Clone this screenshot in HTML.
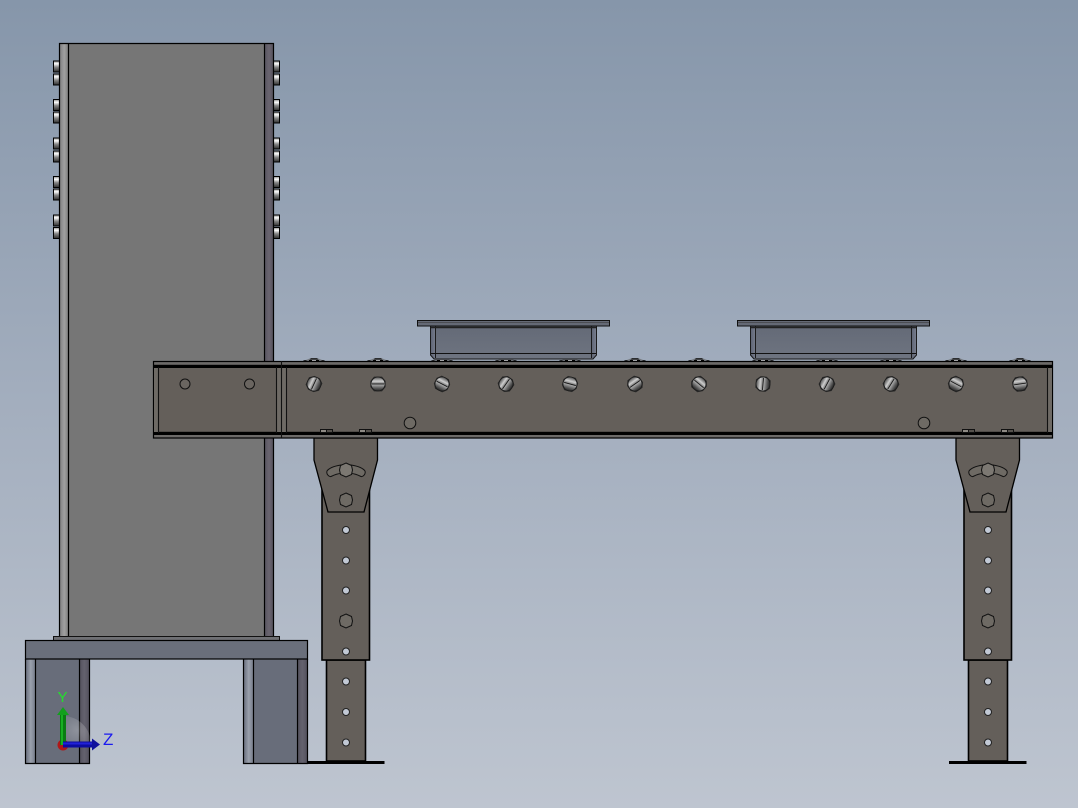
<!DOCTYPE html>
<html>
<head>
<meta charset="utf-8">
<style>
html,body{margin:0;padding:0;width:1078px;height:808px;overflow:hidden;background:#a3aebd}
svg{display:block}
</style>
</head>
<body>
<svg width="1078" height="808" viewBox="0 0 1078 808" xmlns="http://www.w3.org/2000/svg">
<defs>
<linearGradient id="bg" x1="0" y1="0" x2="0" y2="1"><stop offset="0" stop-color="#8696aa"/><stop offset=".5" stop-color="#a3aebe"/><stop offset="1" stop-color="#bec5d0"/></linearGradient>
<linearGradient id="gStud" x1="0" y1="0" x2="0" y2="1"><stop offset="0" stop-color="#888"/><stop offset=".25" stop-color="#fff"/><stop offset=".55" stop-color="#888"/><stop offset="1" stop-color="#2c2c2c"/></linearGradient>
<linearGradient id="lf" x1="0" y1="0" x2="1" y2="0"><stop offset="0" stop-color="#808082"/><stop offset=".5" stop-color="#a0a0a0"/><stop offset="1" stop-color="#7c7c7c"/></linearGradient>
<linearGradient id="rf" x1="0" y1="0" x2="1" y2="0"><stop offset="0" stop-color="#585560"/><stop offset=".5" stop-color="#6a6570"/><stop offset="1" stop-color="#55525c"/></linearGradient>
<linearGradient id="ll" x1="0" y1="0" x2="1" y2="0"><stop offset="0" stop-color="#6c7280"/><stop offset=".5" stop-color="#9aa0ac"/><stop offset="1" stop-color="#747a88"/></linearGradient>
<linearGradient id="lr" x1="0" y1="0" x2="1" y2="0"><stop offset="0" stop-color="#54525e"/><stop offset=".5" stop-color="#64626e"/><stop offset="1" stop-color="#52505c"/></linearGradient>
<linearGradient id="gBall" x1="0" y1="0" x2="0" y2="1"><stop offset="0" stop-color="#4c4c4c"/><stop offset=".3" stop-color="#cfcfcf"/><stop offset=".48" stop-color="#7a7a7a"/><stop offset=".55" stop-color="#a8a8a8"/><stop offset=".78" stop-color="#5e5e5e"/><stop offset="1" stop-color="#222"/></linearGradient>
<linearGradient id="gTray" x1="0" y1="0" x2="0" y2="1"><stop offset="0" stop-color="#646a77"/><stop offset="1" stop-color="#6e7480"/></linearGradient>
<linearGradient id="gTs" x1="0" y1="0" x2="1" y2="0"><stop offset="0" stop-color="#5f6575"/><stop offset="1" stop-color="#767c8c"/></linearGradient>
<radialGradient id="sphere" cx=".5" cy=".5" r=".5"><stop offset="0" stop-color="#fff" stop-opacity=".26"/><stop offset="1" stop-color="#fff" stop-opacity=".12"/></radialGradient>

<g id="stud"><rect x="0" y="0" width="6" height="11" fill="url(#gStud)" stroke="#000" stroke-width="1"/></g>

<g id="bolt">
<path d="M-4 -7.400L-7.600 -3L-7.600 3L-4 7.400L4 7.400L7.600 3L7.600 -3L4 -7.400Z" fill="#2a2a2a"/>
<circle r="7" fill="url(#gBall)" stroke="#1c1c1c" stroke-width=".8"/>
<path d="M-6 0H6" stroke="#111" stroke-width=".8" fill="none"/>
</g>

<g id="dome">
<path d="M-11 3C-7 1.500 -4.500 .5 -3.500 .2L3.500 .2C4.500 .5 7 1.500 11 3Z" fill="#777b82"/>
<path d="M-10.500 2.800H-7.500M-5 2.500H-2M2 2.500H5M7.500 2.800H10.500" stroke="#000" stroke-width="1"/>
<path d="M-4.500 1.500L-3 .3H3L4.500 1.500Z" fill="#0c0c0c"/>
<path d="M-2 2.800H2" stroke="#e6e6e6" stroke-width=".8"/>
</g>

<g id="tray">
<path d="M430.500 326V355L434 359H593L596.500 355V326Z" fill="url(#gTray)"/>
<path d="M431 326H435.500V358H434L431 355Z" fill="url(#gTs)"/>
<path d="M591.500 326H596V355L593 358H591.500Z" fill="url(#gTs)"/>
<path d="M430.500 326V355L434 359H593L596.500 355V326M435.500 326V358M591.500 326V358" stroke="#1a1a1a" stroke-width="1" fill="none"/>
<path d="M431 353.500H596" stroke="#111" stroke-width="1"/>
<path d="M431 327.500H596" stroke="#222" stroke-width="1.500"/>
<rect x="417.500" y="320.500" width="192" height="5.500" fill="#646975" stroke="#111" stroke-width="1"/>
<path d="M418 322.500H609" stroke="#333" stroke-width=".6"/>
</g>

<g id="leg">
<rect x="326.500" y="660" width="39" height="101" fill="#645f5a" stroke="#000" stroke-width="1.600"/>
<path d="M307 762.500H384.500" stroke="#000" stroke-width="3"/>
<rect x="322" y="470" width="47.500" height="190" fill="#645f5a" stroke="#000" stroke-width="1.600"/>
<path d="M314 438V460L328 512H364L377.500 460V438Z" fill="#645f5a" stroke="#000" stroke-width="1.300"/>
<g fill="#c2c9d5" stroke="#222" stroke-width="1">
<circle cx="346" cy="530" r="3.500"/><circle cx="346" cy="560.500" r="3.500"/><circle cx="346" cy="590.500" r="3.500"/><circle cx="346" cy="651.500" r="3.500"/><circle cx="346" cy="681.500" r="3.500"/><circle cx="346" cy="712" r="3.500"/><circle cx="346" cy="742.500" r="3.500"/>
</g>
<g fill="#6e6a64" stroke="#111" stroke-width="1">
<path d="M346 493L351.500 495.500L352.500 500L351.500 504.500L346 507L340.500 504.500L339.500 500L340.500 495.500Z"/>
<path d="M346 614L351.500 616.500L352.500 621L351.500 625.500L346 628L340.500 625.500L339.500 621L340.500 616.500Z"/>
<path d="M341 465C335 466 329 468 327 471C326 474 329 477 331 476.500C335 474.500 338 473.500 341 473.500Z"/>
<path d="M351 465C357 466 363 468 365 471C366 474 363 477 361 476.500C357 474.500 354 473.500 351 473.500Z"/>
<path d="M346 463L351.500 465.500L352.500 470L351.500 474.500L346 477L340.500 474.500L339.500 470L340.500 465.500Z" fill="#7c7872"/>
</g>
</g>
</defs>

<rect width="1078" height="808" fill="url(#bg)"/>

<!-- studs left -->
<use href="#stud" x="53.500" y="61"/><use href="#stud" x="53.500" y="74"/>
<use href="#stud" x="53.500" y="99.500"/><use href="#stud" x="53.500" y="112"/>
<use href="#stud" x="53.500" y="138"/><use href="#stud" x="53.500" y="151"/>
<use href="#stud" x="53.500" y="176.500"/><use href="#stud" x="53.500" y="189"/>
<use href="#stud" x="53.500" y="215"/><use href="#stud" x="53.500" y="227.500"/>
<!-- studs right -->
<use href="#stud" x="273.500" y="61"/><use href="#stud" x="273.500" y="74"/>
<use href="#stud" x="273.500" y="99.500"/><use href="#stud" x="273.500" y="112"/>
<use href="#stud" x="273.500" y="138"/><use href="#stud" x="273.500" y="151"/>
<use href="#stud" x="273.500" y="176.500"/><use href="#stud" x="273.500" y="189"/>
<use href="#stud" x="273.500" y="215"/><use href="#stud" x="273.500" y="227.500"/>

<!-- tower -->
<rect x="59.500" y="43.500" width="214" height="597" fill="#767676"/>
<rect x="60" y="44" width="8.500" height="596" fill="url(#lf)"/>
<rect x="264.500" y="44" width="9" height="596" fill="url(#rf)"/>
<path d="M59.500 640V43.500H273.500V640M68.500 44V640M264.500 44V640" fill="none" stroke="#000" stroke-width="1.200"/>

<!-- base -->
<rect x="25.500" y="659" width="64" height="104.500" fill="#686d7a"/>
<rect x="26" y="659" width="9.500" height="104" fill="url(#ll)"/>
<rect x="79.500" y="659" width="10" height="104" fill="url(#lr)"/>
<path d="M25.500 659V763.500H89.500V659M35.500 659V763M79.500 659V763" fill="none" stroke="#000" stroke-width="1.200"/>
<rect x="243.500" y="659" width="64" height="104.500" fill="#686d7a"/>
<rect x="244" y="659" width="9.500" height="104" fill="url(#ll)"/>
<rect x="297.500" y="659" width="10" height="104" fill="url(#lr)"/>
<path d="M243.500 659V763.500H307.500V659M253.500 659V763M297.500 659V763" fill="none" stroke="#000" stroke-width="1.200"/>
<rect x="53.500" y="636.500" width="226" height="4" fill="#6f7074" stroke="#111" stroke-width="1"/>
<rect x="25.500" y="640.500" width="282" height="18.500" fill="#6a6f7b" stroke="#000" stroke-width="1.200"/>

<!-- legs -->
<use href="#leg"/>
<use href="#leg" x="642"/>

<!-- domes -->
<use href="#dome" x="314" y="358"/><use href="#dome" x="378" y="358"/><use href="#dome" x="442" y="358"/><use href="#dome" x="506" y="358"/><use href="#dome" x="570" y="358"/><use href="#dome" x="635" y="358"/><use href="#dome" x="699" y="358"/><use href="#dome" x="763" y="358"/><use href="#dome" x="827" y="358"/><use href="#dome" x="891" y="358"/><use href="#dome" x="956" y="358"/><use href="#dome" x="1020" y="358"/>

<!-- trays -->
<use href="#tray"/>
<use href="#tray" x="320"/>

<!-- conveyor beam -->
<rect x="153.500" y="361.500" width="899" height="76.500" fill="#645f5a"/>
<rect x="154" y="362" width="898" height="3" fill="#6c6a68"/>
<rect x="154" y="435" width="898" height="3" fill="#6c6a68"/>
<rect x="153.500" y="361.500" width="899" height="76.500" fill="none" stroke="#000" stroke-width="1.200"/>
<rect x="153" y="364.800" width="900" height="3.200" fill="#000"/>
<rect x="153" y="431.800" width="900" height="3.200" fill="#000"/>
<rect x="154" y="368" width="4" height="64" fill="#6e6a65"/>
<rect x="277" y="368" width="4" height="64" fill="#6e6a65"/>
<rect x="282" y="368" width="4" height="64" fill="#6e6a65"/>
<rect x="1048" y="368" width="4" height="64" fill="#6e6a65"/>
<path d="M158.500 367V433M276.500 367V433M281.500 361V438M286.500 367V433M1047.500 367V433" stroke="#111" stroke-width="1.100"/>

<!-- holes -->
<g fill="#6a6560" stroke="#111" stroke-width="1">
<circle cx="185" cy="384" r="5"/>
<circle cx="249.500" cy="384" r="5"/>
<circle cx="410" cy="423" r="5.800" fill="#6e6a64"/>
<circle cx="924" cy="423" r="5.800" fill="#6e6a64"/>
</g>

<!-- tabs -->
<g fill="#8e8a84" stroke="#111" stroke-width="1">
<rect x="320.500" y="429.500" width="6" height="3"/><rect x="326.500" y="429.500" width="6" height="3" fill="#55514c"/>
<rect x="359.500" y="429.500" width="6" height="3"/><rect x="365.500" y="429.500" width="6" height="3" fill="#55514c"/>
<rect x="962.500" y="429.500" width="6" height="3"/><rect x="968.500" y="429.500" width="6" height="3" fill="#55514c"/>
<rect x="1001.500" y="429.500" width="6" height="3"/><rect x="1007.500" y="429.500" width="6" height="3" fill="#55514c"/>
</g>

<!-- bolts -->
<use href="#bolt" transform="translate(314 384) rotate(-65)"/>
<use href="#bolt" transform="translate(378 384)"/>
<use href="#bolt" transform="translate(442 384) rotate(27)"/>
<use href="#bolt" transform="translate(506 384) rotate(-55)"/>
<use href="#bolt" transform="translate(570 384) rotate(15)"/>
<use href="#bolt" transform="translate(635 384) rotate(-35)"/>
<use href="#bolt" transform="translate(699 384) rotate(40)"/>
<use href="#bolt" transform="translate(763 384) rotate(-85)"/>
<use href="#bolt" transform="translate(827 384) rotate(-62)"/>
<use href="#bolt" transform="translate(891 384) rotate(-58)"/>
<use href="#bolt" transform="translate(956 384) rotate(28)"/>
<use href="#bolt" transform="translate(1020 384) rotate(-8)"/>

<!-- triad -->
<path d="M63 716A28 28 0 0 1 91 744H63Z" fill="url(#sphere)"/>
<circle cx="63" cy="745" r="5.500" fill="#b01818"/>
<rect x="60" y="714" width="6" height="31" fill="#0a7c12"/>
<rect x="61" y="714" width="2" height="31" fill="#18b022"/>
<path d="M63 707L69 715H57Z" fill="#12a01c"/>
<rect x="63" y="741.500" width="30" height="6" fill="#0c0ca0"/>
<rect x="63" y="742.500" width="30" height="2" fill="#2222d8"/>
<path d="M100 744.500L92 738.500V750.500Z" fill="#10109c"/>
<text x="57.500" y="702" font-family="Liberation Sans, sans-serif" font-size="15" fill="#22e02c">Y</text>
<text x="103" y="745" font-family="Liberation Sans, sans-serif" font-size="17" fill="#1a1af0">Z</text>
</svg>
</body>
</html>
